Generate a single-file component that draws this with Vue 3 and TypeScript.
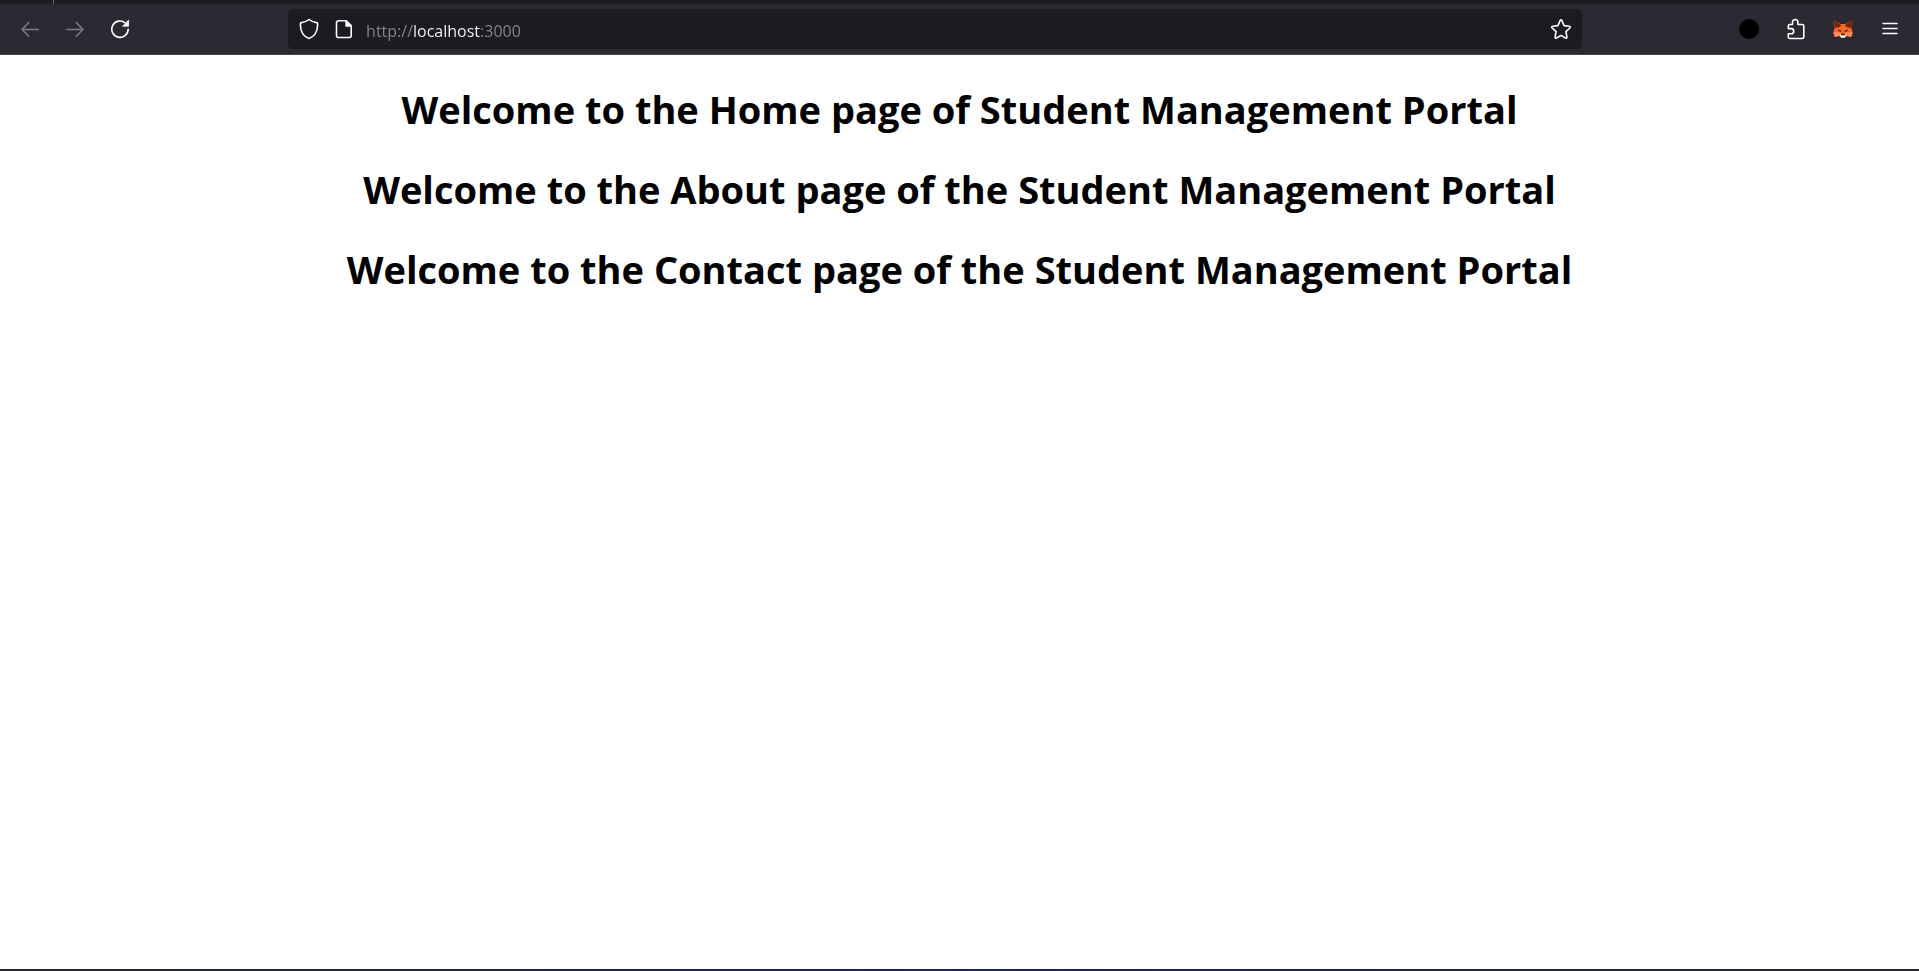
<script setup lang="ts">
import { ref } from 'vue'

const address = ref<string>('http://localhost:3000')

const headings: string[] = [
  'Welcome to the Home page of Student Management Portal',
  'Welcome to the About page of the Student Management Portal',
  'Welcome to the Contact page of the Student Management Portal',
]
</script>

<template>
  <div class="window">
    <div class="tabstrip"><span class="tab-edge"></span></div>
    <header class="toolbar">
      <nav class="group nav" aria-label="Navigation">
        <button type="button" class="tool" aria-label="Back" disabled>
          <svg width="20" height="20" viewBox="0 0 20 20" fill="none" stroke="currentColor" stroke-width="1.6" stroke-linecap="round" stroke-linejoin="round">
            <path d="M18.2 10.5H2M8.8 3.5L2 10.5l6.8 6.7" />
          </svg>
        </button>
        <button type="button" class="tool" aria-label="Forward" disabled>
          <svg width="20" height="20" viewBox="0 0 20 20" fill="none" stroke="currentColor" stroke-width="1.6" stroke-linecap="round" stroke-linejoin="round">
            <path d="M1.8 10.5H18M11.2 3.5L18 10.5l-6.8 6.7" />
          </svg>
        </button>
        <button type="button" class="tool" aria-label="Reload">
          <svg width="20" height="20" viewBox="0 0 20 20" fill="none" stroke="currentColor" stroke-width="1.6" stroke-linecap="round">
            <path d="M18.2 10.2A8.2 8.2 0 1 1 15.4 4" />
            <path d="M18.6 1.3v5.9h-5.7z" fill="currentColor" stroke-width=".8" stroke-linejoin="round" />
          </svg>
        </button>
      </nav>
      <div class="spring"></div>
      <form class="urlbar" @submit.prevent>
        <button type="button" class="inner" aria-label="Tracking protection">
          <svg width="20" height="22" viewBox="0 0 20 22" fill="none" stroke="currentColor" stroke-width="1.6" stroke-linejoin="round">
            <path d="M10 1.5C8.2 3 5.1 4.3 1.6 4.9c-.5 4.1.2 8.1 2.4 11.2 1.500 2.100 3.500 3.700 6 4.400 2.500-.7 4.500-2.300 6-4.400 2.200-3.100 2.900-7.100 2.400-11.200C14.900 4.300 11.800 3 10 1.500z" />
          </svg>
        </button>
        <button type="button" class="inner" aria-label="Site information">
          <svg width="18" height="20" viewBox="0 0 18 20" fill="none" stroke="currentColor" stroke-width="1.6" stroke-linejoin="round">
            <path d="M3.5 1.8h7.6l5.1 5.1v9.6a2 2 0 0 1-2 2H3.5a2 2 0 0 1-2-2V3.800a2 2 0 0 1 2-2z" />
            <path d="M11.1 1.800v5.100h5.100z" fill="currentColor" />
          </svg>
        </button>
        <input v-model="address" class="address" type="text" aria-label="Address" spellcheck="false" />
        <button type="button" class="inner" aria-label="Bookmark this page">
          <svg width="22" height="22" viewBox="0 0 22 22" fill="none" stroke="currentColor" stroke-width="1.6" stroke-linejoin="round">
            <path d="M10.100 2.700q.9-1.600 1.800 0l2.200 4.900 5.200.7q1.700.4.500 1.700l-3.900 3.700 1 5.200q.1 1.700-1.400 1.100L11 17.400 6.500 20q-1.500.6-1.400-1.100l1-5.200L2.200 10q-1.200-1.300.5-1.700l5.200-.7z" />
          </svg>
        </button>
      </form>
      <div class="spring"></div>
      <div class="group extras">
        <button type="button" class="tool" aria-label="Account">
          <svg width="20" height="20" viewBox="0 0 20 20"><circle cx="10" cy="10" r="10" fill="#000" /></svg>
        </button>
        <button type="button" class="tool" aria-label="Extensions">
          <svg width="20" height="22" viewBox="0 0 20 22" fill="none" stroke="currentColor" stroke-width="1.6" stroke-linejoin="round">
            <path d="M3.500 6.500h3V4.200a2.700 2.700 0 0 1 5.400 0v2.300h4.300a1.600 1.600 0 0 1 1.600 1.600v10.800a1.600 1.600 0 0 1-1.600 1.600H3.900a1.600 1.600 0 0 1-1.600-1.600v-3.100h2.800a2.600 2.600 0 0 0 0-5.200H2.300V8.100a1.600 1.600 0 0 1 1.200-1.600z" />
          </svg>
        </button>
        <button type="button" class="tool" aria-label="MetaMask">
          <svg width="20" height="20" viewBox="0 0 20 20">
            <path fill="#f4652a" d="M1 1l6.500 4h5L19 1l.4 4-1.100 4 1.400 4.500-1.500 4.500-4.200-1-2 1.700H8L6 17l-4.200 1L.3 13.500 1.700 9 .6 5z" />
            <path fill="#76280f" d="M1 .8l7.300 5.400-2.100 2L1.800 9 .6 5zM19 .8l-7.300 5.400 2.100 2 4.400.8 1.200-4z" />
            <path fill="#ff8c5d" d="M.3 13.500l6.300-.4 1.600 2.300L6 17l-4.200 1zM19.700 13.500l-6.300-.4-1.600 2.300L14 17l4.200 1z" />
            <path fill="#3a2220" d="M5 10.500l3.200 1.200-.3 1.200-2.500-.8zM15 10.500l-3.200 1.200.3 1.200 2.500-.8z" />
            <path fill="#f4eee9" d="M6.500 16.200l1.500-.9h4l1.500.9-1.900 2.600H8.400z" />
            <path fill="#241c21" d="M8.300 14.800h3.400l.3 1.500H8z" />
          </svg>
        </button>
        <button type="button" class="tool" aria-label="Open application menu">
          <svg width="16" height="14" viewBox="0 0 16 14" fill="none" stroke="currentColor" stroke-width="1.5" stroke-linecap="round">
            <path d="M1 1.5h14M1 6.5h14M1 11.5h14" />
          </svg>
        </button>
      </div>
    </header>
    <main class="page">
      <h1 v-for="heading in headings" :key="heading">{{ heading }}</h1>
    </main>
    <footer class="bottom-edge"></footer>
  </div>
</template>

<style>
body {
  margin: 0;
  background: #fff;
}
</style>

<style scoped>
.window {
  display: flex;
  flex-direction: column;
  min-height: 100vh;
  font-family: 'Segoe UI', 'Open Sans', 'Noto Sans', sans-serif;
}

.tabstrip {
  display: flex;
  height: 4px;
  padding-left: 53px;
  background: #1c1b22;
}

.tab-edge {
  width: 1px;
  background: #66656c;
}

.toolbar {
  display: flex;
  align-items: center;
  height: 50px;
  padding: 0 6px 0 7px;
  background: #2b2a33;
  border-bottom: 1px solid #45444c;
}

.group {
  display: flex;
}

.nav {
  padding-right: 3px;
}

.tool,
.inner {
  display: flex;
  align-items: center;
  justify-content: center;
  height: 40px;
  padding: 0;
  border: 0;
  background: none;
  color: #fbfbfe;
}

.nav .tool {
  width: 45px;
}

.nav .tool:disabled {
  color: #7c7b82;
}

.extras .tool {
  width: 47px;
}

.spring {
  flex: 1;
}

.urlbar {
  display: flex;
  flex: 9;
  align-items: center;
  height: 40px;
  padding: 0 3px;
  border-radius: 5px;
  background: #1c1b22;
}

.inner {
  width: 35px;
}

.address {
  flex: 1;
  min-width: 0;
  height: 40px;
  padding: 4px 0 0 5px;
  box-sizing: border-box;
  border: 0;
  outline: 0;
  background: linear-gradient(90deg, #87868c 52px, #fbfbfe 52px 119px, #87868c 119px);
  background-clip: text;
  color: transparent;
  caret-color: #fbfbfe;
  font-family: 'Segoe UI', 'Open Sans', 'Noto Sans', sans-serif;
  font-size: 16px;
}

.page {
  display: flex;
  flex: 1;
  flex-direction: column;
  gap: 27px;
  padding: 28px 16px;
  text-align: center;
}

h1 {
  margin: 0;
  color: #000;
  font-size: 38px;
  font-weight: 700;
  line-height: 53px;
}

.bottom-edge {
  height: 2px;
  background: linear-gradient(90deg, #25242f, #1b2350 50%, #25242f);
}
</style>
